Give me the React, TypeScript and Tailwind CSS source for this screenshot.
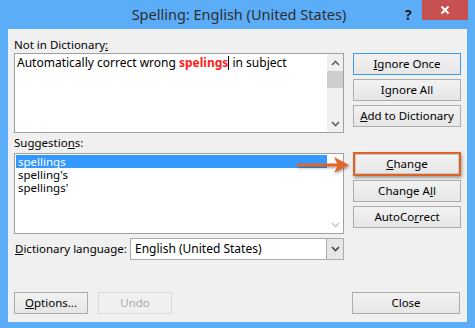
import React from "react";

const font = { fontFamily: '"Noto Sans", "Open Sans", sans-serif' };

function Btn({
  children,
  focus,
  disabled,
  className = "",
}: {
  children: React.ReactNode;
  focus?: boolean;
  disabled?: boolean;
  className?: string;
}) {
  return (
    <div
      className={
        "h-[22px] flex items-center justify-center border text-[11.5px] leading-none whitespace-nowrap " +
        (focus
          ? "border-[#3c9ce8] bg-gradient-to-b from-[#f2f2f2] to-[#e6e6e6] "
          : disabled
          ? "border-[#d9d9d9] text-[#a8a8a8] bg-[#f0f0f0] "
          : "border-[#acacac] bg-gradient-to-b from-[#f2f2f2] to-[#e6e6e6] ") +
        className
      }
    >
      {children}
    </div>
  );
}

function Chevron({ up, color = "#606060" }: { up?: boolean; color?: string }) {
  return (
    <svg width="9" height="6" viewBox="0 0 9 6">
      <path
        d={up ? "M1 5 L4.5 1.5 L8 5" : "M1 1 L4.5 4.5 L8 1"}
        stroke={color}
        strokeWidth="1.6"
        fill="none"
      />
    </svg>
  );
}

export default function App() {
  return (
    <div className="w-[475px] h-[328px] bg-[#5cadf8] flex flex-col overflow-hidden" style={font}>
      {/* title bar */}
      <div className="h-[29px] flex items-start relative">
        <div className="flex-1 h-[29px] flex items-center justify-center pl-[3px] text-[14.5px] text-[#2e2e2e]">
          Spelling: English (United States)
        </div>
        <div className="absolute left-[405px] top-[4px] text-[14px] font-bold text-[#1a1a1a]">?</div>
        <div className="absolute left-[422px] top-0 w-[46px] h-[20px] bg-[#c75050] flex items-center justify-center">
          <svg width="10" height="10" viewBox="0 0 10 10">
            <path d="M1.5 1.5 L8.5 8.5 M8.5 1.5 L1.5 8.5" stroke="#fff" strokeWidth="2" />
          </svg>
        </div>
      </div>

      {/* body */}
      <div className="mx-[8px] h-[293px] bg-[#f0f0f0] relative flex flex-col pl-[6px] pr-[6px] pt-[8px] text-[11.5px] text-black">
        <div className="h-[16px] leading-[16px]">
          Not in Dictionary<span className="underline">:</span>
        </div>
        <div className="flex">
          <div className="w-[330px] h-[80px] border border-[#a0a0a0] bg-white flex">
            <div className="flex-1 pl-[2px] pt-[1px] leading-[16px] text-[12px] whitespace-nowrap">
              Automatically correct wrong{" "}
              <span className="font-bold text-[#ff2020]">spelings</span>
              <span className="inline-block w-[1px] h-[14px] bg-black align-[-3px]" /> in subject
            </div>
            <div className="w-[16px] bg-[#f0f0f0] flex flex-col items-center">
              <div className="h-[17px] flex items-center">
                <Chevron up />
              </div>
              <div className="w-[16px] h-[17px] bg-[#cdcdcd]" />
              <div className="flex-1" />
              <div className="h-[17px] flex items-center">
                <Chevron />
              </div>
            </div>
          </div>
          <div className="ml-[9px] w-[108px] flex flex-col gap-[4px]">
            <Btn focus>
              <span className="underline">I</span>gnore Once
            </Btn>
            <Btn>
              I<span className="underline">g</span>nore All
            </Btn>
            <Btn>
              <span className="underline">A</span>dd to Dictionary
            </Btn>
          </div>
        </div>

        <div className="h-[20px] flex items-center">
          Suggestio<span className="underline">n</span>s:
        </div>
        <div className="flex">
          <div className="w-[330px] h-[81px] border border-[#a0a0a0] bg-white flex">
            <div className="flex-1 pt-[1px] pl-[1px] leading-[13px] text-[11.5px]">
              <div className="bg-[#3399ff] text-white pl-[2px] h-[13px]">spellings</div>
              <div className="pl-[2px] h-[13px]">spelling's</div>
              <div className="pl-[2px] h-[13px]">spellings'</div>
            </div>
            <div className="w-[16px] flex flex-col items-center justify-end">
              <div className="h-[17px] flex items-center">
                <Chevron color="#c8c8c8" />
              </div>
            </div>
          </div>
          <div className="ml-[9px] w-[108px] flex flex-col gap-[4px] -mt-[1px]">
            <div className="border-2 border-[#df6225] shadow-[1px_2px_3px_rgba(0,0,0,0.35)]">
              <div className="h-[20px] flex items-center justify-center text-[11.5px] bg-gradient-to-b from-[#f2f2f2] to-[#e6e6e6] border border-[#c8c8c8]">
                <span className="underline">C</span>hange
              </div>
            </div>
            <Btn>
              Change A<span className="underline">l</span>l
            </Btn>
            <Btn>
              AutoCo<span className="underline">r</span>rect
            </Btn>
          </div>
        </div>

        <div className="flex items-center mt-[4px] h-[22px]">
          <div className="w-[116px] whitespace-nowrap pl-[1px]">
            <span className="underline">D</span>ictionary language:
          </div>
          <div className="w-[214px] h-[22px] border border-[#acacac] bg-white flex">
            <div className="flex-1 flex items-center pl-[4px] whitespace-nowrap text-[12px]">English (United States)</div>
            <div className="w-[17px] bg-[#e6e6e6] border-l border-[#acacac] flex items-center justify-center">
              <Chevron color="#444" />
            </div>
          </div>
        </div>

        <div className="flex-1" />
        <div className="flex items-center pb-[8px]">
          <Btn className="w-[74px]">
            <span className="underline">O</span>ptions...
          </Btn>
          <Btn disabled className="w-[74px] ml-[10px]">
            Undo
          </Btn>
          <div className="flex-1" />
          <Btn className="w-[108px] mr-[1px]">Close</Btn>
        </div>

        {/* callout arrow */}
        <svg className="absolute left-[287px] top-[126px]" width="62" height="22" viewBox="0 0 62 22">
          <defs>
            <filter id="sh" x="-20%" y="-50%" width="140%" height="200%">
              <feDropShadow dx="1" dy="1.5" stdDeviation="1" floodColor="#000" floodOpacity="0.35" />
            </filter>
          </defs>
          <g filter="url(#sh)">
            <path d="M2 8.5 L44 8.5 L44 11.5 L2 11.5 Z" fill="#e0662a" />
            <path d="M39 2 L54 10 L39 18 L43 10 Z" fill="#e0662a" />
          </g>
        </svg>
      </div>
    </div>
  );
}
